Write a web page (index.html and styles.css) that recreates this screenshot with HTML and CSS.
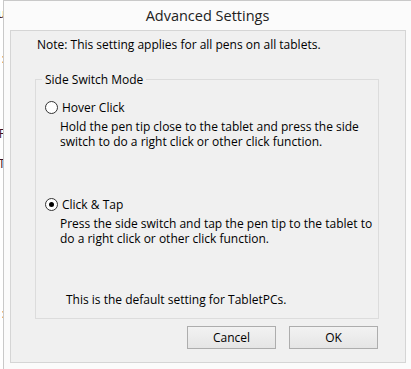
FILE: index.html
```html
<!DOCTYPE html>
<html lang="en">
<head>
    <meta charset="UTF-8">
    <title>Advanced Settings</title>
    <link rel="stylesheet" href="styles.css">
</head>
<body>
<div class="screen">

    <!-- sliver of the window behind -->
    <div class="behind">
        <div class="ghost-text">u<br><br><br>:<br><br><br><br><br>F<br><br>T<br><br><br><br><br><br><br><br><br><br>:</div>
    </div>

    <!-- Dialog -->
    <div class="dialog">
        <div class="title-bar">Advanced Settings</div>

        <div class="panel">
            <p class="note">Note: This setting applies for all pens on all tablets.</p>

            <fieldset class="group">
                <legend>Side Switch Mode</legend>

                <label class="option">
                    <input type="radio" name="mode" value="hover">
                    <span class="radio"></span>
                    <span class="option-title">Hover Click</span>
                </label>
                <p class="option-desc">Hold the pen tip close to the tablet and press the side<br>switch to do a right click or other click function.</p>

                <label class="option option-second">
                    <input type="radio" name="mode" value="tap" checked>
                    <span class="radio"></span>
                    <span class="option-title">Click &amp; Tap</span>
                </label>
                <p class="option-desc">Press the side switch and tap the pen tip to the tablet to<br>do a right click or other click function.</p>

                <p class="default-note">This is the default setting for TabletPCs.</p>
            </fieldset>

            <div class="buttons">
                <button type="button">Cancel</button>
                <button type="button">OK</button>
            </div>
        </div>
    </div>

</div>
</body>
</html>
```

FILE: styles.css
```css
html, body {
    margin: 0;
    padding: 0;
}
body {
    font-family: "Open Sans", "Noto Sans", sans-serif;
    font-size: 12px;
    color: #000;
    background-color: #fbfbfb;
}
.screen {
    display: flex;
    width: 411px;
    height: 369px;
    overflow: hidden;
}
.behind {
    width: 3px;
    flex: none;
    overflow: hidden;
    background: #fff;
}
.ghost-text {
    width: 12px;
    margin-left: -7px;
    padding-top: 6px;
    line-height: 15px;
    text-align: right;
    color: #3a1020;
}
.dialog {
    flex: 1;
    border-left: 1px solid #c9c9c9;
    border-top: 1px solid #c9c9c9;
    background: #fbfbfb;
    padding: 0 5px 0 6px;
}
.title-bar {
    height: 29px;
    line-height: 30px;
    text-align: center;
    font-size: 14.5px;
    color: #222;
    padding-right: 1px;
}
.panel {
    box-sizing: border-box;
    height: 333px;
    border: 1px solid #d5d5d5;
    background: #f0f0f0;
}
.note {
    margin: 6px 0 0 26px;
    line-height: 15px;
}
.group {
    box-sizing: border-box;
    width: 344px;
    height: 247px;
    margin: 20px 0 0 24px;
    padding: 0;
    border: 1px solid #dcdcdc;
}
.group legend {
    margin-left: 6px;
    padding: 0 3px;
    line-height: 15px;
}
.option {
    display: flex;
    align-items: center;
    margin: 13px 0 0 9px;
    line-height: 15px;
}
.option input {
    display: none;
}
.radio {
    width: 11px;
    height: 11px;
    border: 1px solid #333;
    border-radius: 50%;
    background: #fff;
    margin-right: 4px;
    display: flex;
    align-items: center;
    justify-content: center;
}
.option input:checked + .radio::after {
    content: "";
    width: 5px;
    height: 5px;
    border-radius: 50%;
    background: #000;
}
.option-second {
    margin-top: 48px;
}
.option-desc {
    margin: 4px 0 0 24px;
    line-height: 15px;
}
.default-note {
    margin: 46px 0 0 30px;
    line-height: 15px;
}
.buttons {
    display: flex;
    justify-content: flex-end;
    gap: 13px;
    margin: 7px 27px 0 0;
}
.buttons button {
    width: 89px;
    height: 23px;
    padding: 0;
    font-family: inherit;
    font-size: 12px;
    color: #000;
    border: 1px solid #adadad;
    background: linear-gradient(#f2f2f2, #e5e5e5);
}
```
